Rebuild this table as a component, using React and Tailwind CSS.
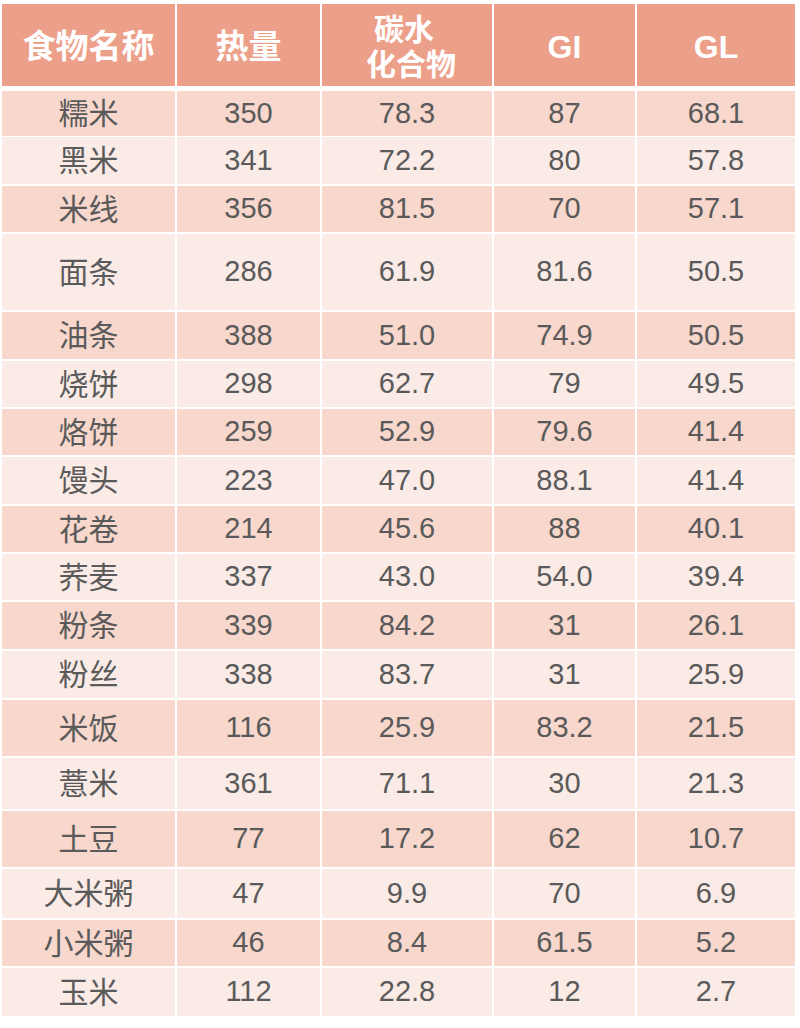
import React from 'react';

const rows = [
    ['糯米', '350', '78.3', '87', '68.1', 44],
    ['黑米', '341', '72.2', '80', '57.8', 47],
    ['米线', '356', '81.5', '70', '57.1', 46],
    ['面条', '286', '61.9', '81.6', '50.5', 76],
    ['油条', '388', '51.0', '74.9', '50.5', 47],
    ['烧饼', '298', '62.7', '79', '49.5', 46],
    ['烙饼', '259', '52.9', '79.6', '41.4', 46],
    ['馒头', '223', '47.0', '88.1', '41.4', 47],
    ['花卷', '214', '45.6', '88', '40.1', 46],
    ['荞麦', '337', '43.0', '54.0', '39.4', 46],
    ['粉条', '339', '84.2', '31', '26.1', 47],
    ['粉丝', '338', '83.7', '31', '25.9', 47],
    ['米饭', '116', '25.9', '83.2', '21.5', 56],
    ['薏米', '361', '71.1', '30', '21.3', 51],
    ['土豆', '77', '17.2', '62', '10.7', 56],
    ['大米粥', '47', '9.9', '70', '6.9', 49],
    ['小米粥', '46', '8.4', '61.5', '5.2', 46],
    ['玉米', '112', '22.8', '12', '2.7', 48],
];

const cols = 'grid grid-cols-[173px_143px_170px_141px_158px] gap-x-[2px]';

const App = () => {
    return (
        <div
            className="w-[800px] min-h-[1028px] bg-white pt-[4px] pl-[2px]"
            style={{ fontFamily: '"Liberation Sans", "Noto Sans CJK SC", sans-serif' }}
        >
            <div className={`${cols} h-[82px] mb-[5px] text-white font-bold`}>
                <div className="bg-[#eda089] flex items-center justify-center pt-[3px] text-[33px]">食物名称</div>
                <div className="bg-[#eda089] flex items-center justify-center pt-[3px] text-[33px]">热量</div>
                <div className="bg-[#eda089] flex flex-col items-center justify-center pt-[3px] text-[30px] leading-[35px]">
                    <span className="-ml-[6px]">碳水</span>
                    <span className="ml-[8px]">化合物</span>
                </div>
                <div className="bg-[#eda089] flex items-center justify-center pt-[3px] text-[32px]">GI</div>
                <div className="bg-[#eda089] flex items-center justify-center pt-[3px] text-[32px]">GL</div>
            </div>
            <div className="flex flex-col gap-y-[2px]">
                {rows.map((r, i) => {
                    const bg = i % 2 === 0 ? 'bg-[#f8d7cc]' : 'bg-[#fbebe6]';
                    return (
                        <div key={r[0]} className={`${cols} text-[29px] text-[#5a5a5a]`} style={{ height: r[5] }}>
                            {r.slice(0, 5).map((c, j) => (
                                <div
                                    key={j}
                                    className={`${bg} flex items-center justify-center ${j === 0 ? 'text-[30px]' : ''}`}
                                >
                                    {c}
                                </div>
                            ))}
                        </div>
                    );
                })}
            </div>
        </div>
    );
};

export default App;
